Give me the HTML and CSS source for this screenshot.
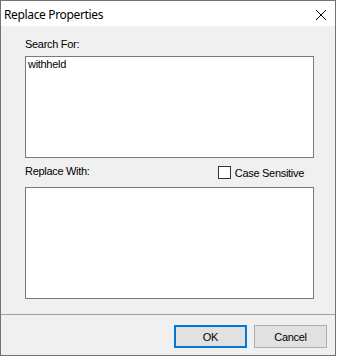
FILE: index.html
```html
<!DOCTYPE html>
<html>
<head>
<meta charset="utf-8">
<link rel="stylesheet" href="styles.css">
</head>
<body>
<div class="window">
  <div class="titlebar">
    <span class="title">Replace Properties</span>
    <svg class="close" width="12" height="12" viewBox="0 0 12 12"><path d="M1 1 L11 11 M11 1 L1 11" stroke="#000" stroke-width="1" fill="none"/></svg>
  </div>
  <div class="content">
    <div class="label">Search For:</div>
    <div class="box search">withheld</div>
    <div class="row">
      <div class="label">Replace With:</div>
      <label class="check"><span class="checkbox"></span><span class="check-text">Case Sensitive</span></label>
    </div>
    <div class="box replace"></div>
  </div>
  <div class="footer">
    <button class="btn default">OK</button>
    <button class="btn">Cancel</button>
  </div>
</div>
</body>
</html>
```
FILE: styles.css
```css
html, body {
  margin: 0;
  padding: 0;
  background: #ffffff;
}
body {
  width: 337px;
  height: 357px;
  font-family: "Liberation Sans", Arial, sans-serif;
  font-size: 11px;
  letter-spacing: -0.3px;
  color: #000;
}
.window {
  width: 336px;
  height: 356px;
  box-sizing: border-box;
  border: 1px solid #737373;
  display: flex;
  flex-direction: column;
  background: #f0f0f0;
}
.titlebar {
  height: 25px;
  flex: none;
  background: #ffffff;
  display: flex;
  align-items: center;
  justify-content: space-between;
  padding: 0 8px 0 3px;
}
.title {
  font-family: "Noto Sans", "Open Sans", sans-serif;
  font-size: 12px;
  letter-spacing: -0.35px;
  color: #000;
  position: relative;
  top: 1px;
}
.close {
  display: block;
  position: relative;
  top: 1px;
}
.content {
  flex: 1;
  padding: 12px 21px 0 24px;
  display: flex;
  flex-direction: column;
}
.label {
  line-height: 13px;
  height: 13px;
}
.box {
  background: #ffffff;
  border: 1px solid #7a7a7a;
  box-sizing: border-box;
  padding: 1px 2px;
  line-height: 13px;
}
.search {
  margin-top: 5px;
  height: 102px;
}
.row {
  display: flex;
  justify-content: space-between;
  align-items: flex-start;
  margin-top: 6px;
  height: 17px;
}
.row .label {
  margin-top: 1px;
}
.check {
  display: flex;
  align-items: flex-start;
  margin-right: 10px;
}
.checkbox {
  width: 13px;
  height: 13px;
  box-sizing: border-box;
  border: 1px solid #333333;
  background: #ffffff;
  margin-top: 2px;
}
.check-text {
  margin-left: 4px;
  margin-top: 3px;
  line-height: 13px;
}
.replace {
  margin-top: 6px;
  height: 112px;
}
.footer {
  flex: none;
  height: 41px;
  box-sizing: border-box;
  border-top: 1px solid #a0a0a0;
  display: flex;
  justify-content: flex-end;
  align-items: flex-start;
  padding: 10px 8px 0 0;
  gap: 7px;
}
.btn {
  width: 73px;
  height: 23px;
  box-sizing: border-box;
  border: 1px solid #adadad;
  background: #e1e1e1;
  font-family: "Liberation Sans", Arial, sans-serif;
  font-size: 11px;
  letter-spacing: -0.3px;
  color: #000;
  padding: 1px 0 0 0;
  margin: 0;
}
.btn.default {
  border: 2px solid #0078d7;
}
```
